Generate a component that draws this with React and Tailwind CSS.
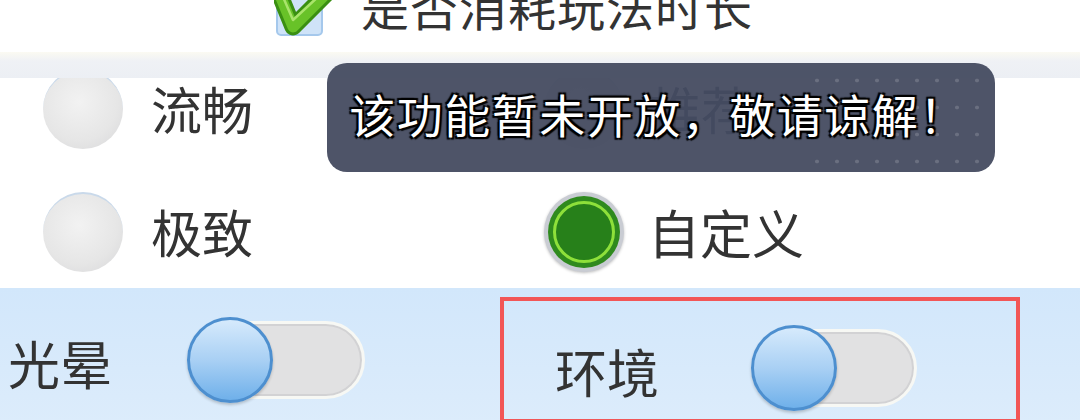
import React from 'react';

const font = { fontFamily: '"Noto Sans CJK SC", "Noto Sans", sans-serif' };

const Radio = ({ checked }) =>
    checked ? (
        <div className="w-[80px] h-[80px] rounded-full bg-[#c9ccd3] flex items-center justify-center shadow-[0_1px_3px_rgba(0,0,0,0.25)]">
            <div className="w-[72px] h-[72px] rounded-full bg-[#2f8a1e] flex items-center justify-center">
                <div className="w-[62px] h-[62px] rounded-full border-[3px] border-[#8ee03a] bg-[#27801a]" />
            </div>
        </div>
    ) : (
        <div className="w-[80px] h-[80px] rounded-full bg-[radial-gradient(circle_at_45%_40%,#f2f2f2_0%,#e6e6e6_60%,#d6d6d8_100%)] border-t-2 border-[#c9d9ea]" />
    );

const Toggle = ({ track }) => (
    <div className="relative h-[86px] flex items-center">
        <div className={`ml-[16px] h-[78px] rounded-full bg-[#e1e1e2] border-[3px] border-[#f7f8f4] shadow-[inset_0_0_0_2px_#d2d2d4] ${track}`} />
        <div className="absolute left-0 top-0 w-[86px] h-[86px] rounded-full border-[3px] border-[#4d8fcf] bg-[linear-gradient(180deg,#d6eafc_0%,#a9d0f4_50%,#6fb0ea_100%)] shadow-[0_2px_3px_rgba(0,0,0,0.2)]" />
    </div>
);

const Row = ({ children }) => <div className="h-[123px] grid grid-cols-2 items-center">{children}</div>;

export default function App() {
    return (
        <div className="w-[1080px] h-[420px] bg-white overflow-hidden flex flex-col text-[#333]" style={font}>
            {/* header with the cropped checkbox row */}
            <div className="h-[52px] shrink-0 overflow-hidden flex items-start pl-[276px]">
                <div className="relative w-[47px] h-[46px] -mt-[10px] rounded-[5px] bg-[#cfe3f8] border-2 border-[#a5c8ec]">
                    <svg className="absolute -left-[4px] -top-[10px]" width="66" height="56" viewBox="0 0 66 56">
                        <path d="M3 6 L19 45 L62 2" fill="none" stroke="#3a8f12" strokeWidth="17" strokeLinejoin="round" strokeLinecap="round" />
                        <path d="M3 6 L19 45 L62 2" fill="none" stroke="#68c228" strokeWidth="11" strokeLinejoin="round" strokeLinecap="round" />
                        <path d="M6 8 L19 38 L58 2" fill="none" stroke="#a9e46b" strokeWidth="2.5" strokeLinejoin="round" />
                    </svg>
                </div>
                <div className="ml-[38px] -mt-[19px] text-[48px] leading-none tracking-[1px]">是否消耗玩法时长</div>
            </div>

            {/* divider band */}
            <div className="h-[26px] shrink-0 bg-[linear-gradient(180deg,#fbfaf2_0%,#eff1f5_35%,#eceff4_100%)]" />

            {/* quality options */}
            <div className="relative h-[210px] shrink-0">
                <div className="h-full overflow-hidden">
                    <div className="-mt-[31px]">
                        <Row>
                            <div className="flex items-center pl-[43px]">
                                <Radio />
                                <span className="ml-[28px] text-[51px] leading-none">流畅</span>
                            </div>
                            <div className="flex items-center pl-[4px]">
                                <Radio />
                                <span className="ml-[26px] text-[51px] leading-none text-[#2a3a5a]">推荐</span>
                            </div>
                        </Row>
                        <Row>
                            <div className="flex items-center pl-[43px]">
                                <Radio />
                                <span className="ml-[28px] text-[51px] leading-none">极致</span>
                            </div>
                            <div className="flex items-center pl-[4px]">
                                <Radio checked />
                                <span className="ml-[24px] text-[52px] leading-none">自定义</span>
                            </div>
                        </Row>
                    </div>
                </div>

                {/* toast */}
                <div className="absolute left-[327px] -top-[15px] w-[668px] h-[109px] rounded-[20px] bg-[#454b60]/95 flex items-center justify-center overflow-hidden">
                    <div className="absolute right-[8px] top-[4px] w-[180px] h-[100px] bg-[radial-gradient(circle,rgba(255,255,255,0.16)_1.6px,transparent_2.2px)] bg-[length:20px_27px]" />
                    <span className="relative -ml-[6px] -mt-[10px] text-[46px] leading-none tracking-[1.5px] text-white [text-shadow:0_0_3px_#000,2px_2px_1px_#000,-2px_-2px_1px_#000,2px_-2px_1px_#000,-2px_2px_1px_#000]">
                        该功能暂未开放，敬请谅解！
                    </span>
                </div>
            </div>

            {/* effects */}
            <div className="flex-1 bg-[linear-gradient(180deg,#d2e7fb_0%,#dcecfb_100%)] flex items-start">
                <div className="w-[500px] h-full flex items-center pl-[8px]">
                    <span className="text-[52px] leading-none mt-[14px]">光晕</span>
                    <div className="ml-[75px] mt-[8px]">
                        <Toggle track="w-[162px]" />
                    </div>
                </div>
                <div className="mt-[9px] w-[520px] h-[126px] border-4 border-[#f25656] flex items-center pl-[51px]">
                    <span className="text-[52px] leading-none mt-[22px]">环境</span>
                    <div className="ml-[92px] mt-[16px]">
                        <Toggle track="w-[150px]" />
                    </div>
                </div>
            </div>
        </div>
    );
}
